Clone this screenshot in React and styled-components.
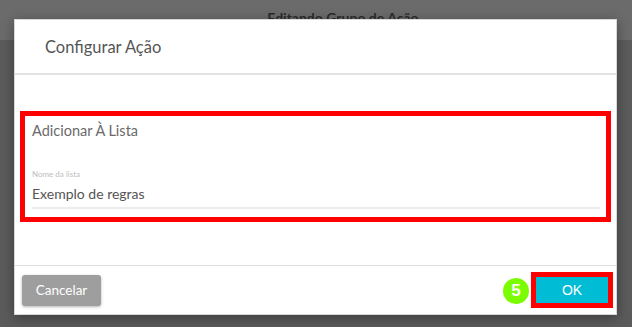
import React from "react";
import styled, { createGlobalStyle } from "styled-components";

const Global = createGlobalStyle`
  html, body { margin: 0; padding: 0; }
  body { font-family: Lato, "Open Sans", sans-serif; background: #5b5b5b; }
`;

const Page = styled.div`
  position: relative;
  width: 632px;
  height: 327px;
  overflow: hidden;
  background: #5b5b5b;
`;

const TopBar = styled.div`
  height: 40px;
  background: #6b6b6b;
  display: flex;
  justify-content: center;
  padding-left: 54px;
  box-sizing: border-box;
`;

const TopTitle = styled.div`
  margin-top: 10px;
  font-size: 14px;
  line-height: 16px;
  font-weight: 700;
  color: #2b2b2b;
`;

const Modal = styled.div`
  position: absolute;
  left: 14px;
  top: 19px;
  width: 603px;
  height: 296px;
  background: #fff;
  display: flex;
  flex-direction: column;
  box-shadow: 0 3px 12px rgba(0, 0, 0, 0.35);
  border: 1px solid #d8d8d8;
  box-sizing: border-box;
`;

const Header = styled.div`
  height: 53px;
  flex: none;
  display: flex;
  align-items: center;
  padding-left: 30px;
  border-bottom: 2px solid #e2e2e2;
  font-size: 16.5px;
  color: #555;
`;

const Body = styled.div`
  flex: 1;
  padding: 36px 5px 0 5px;
`;

const Highlight = styled.div`
  border: 5px solid #ff0000;
  height: 111px;
  box-sizing: border-box;
  padding: 6px 6px 0 7px;
`;

const SectionTitle = styled.div`
  font-size: 14.5px;
  line-height: 18px;
  color: #6a6a6a;
`;

const Field = styled.div`
  margin-top: 29px;
  border-bottom: 2px solid #ececec;
  padding-bottom: 4px;
`;

const FieldLabel = styled.div`
  font-size: 8px;
  line-height: 10px;
  color: #bdbdbd;
`;

const FieldValue = styled.div`
  margin-top: 6px;
  font-size: 14px;
  line-height: 18px;
  color: #555;
`;

const Footer = styled.div`
  height: 48px;
  flex: none;
  border-top: 1px solid #dedede;
  display: flex;
  align-items: center;
  justify-content: space-between;
  padding: 0 3px 0 7px;
`;

const CancelButton = styled.button`
  width: 79px;
  height: 31px;
  border: none;
  border-radius: 3px;
  background: #9e9e9e;
  color: #fff;
  font-family: Lato, sans-serif;
  font-size: 13.5px;
  box-shadow: 0 1px 3px rgba(0, 0, 0, 0.3);
  padding: 0;
`;

const Right = styled.div`
  display: flex;
  align-items: center;
  gap: 2px;
`;

const Badge = styled.div`
  width: 26px;
  height: 26px;
  border-radius: 50%;
  background: #7cfc00;
  color: #fff;
  font-family: "Liberation Sans", Arial, sans-serif;
  font-weight: 700;
  font-size: 17px;
  display: flex;
  align-items: center;
  justify-content: center;
  margin-top: 2px;
`;

const OkFrame = styled.div`
  border: 5px solid #ff0000;
  display: flex;
`;

const OkButton = styled.button`
  width: 72px;
  height: 26px;
  border: none;
  background: #00bcd4;
  color: #fff;
  font-family: "Liberation Sans", Arial, sans-serif;
  font-size: 14px;
  padding: 0;
`;

export default function App() {
  return (
    <Page>
      <Global />
      <TopBar>
        <TopTitle>Editando Grupo de Ação</TopTitle>
      </TopBar>
      <Modal>
        <Header>Configurar Ação</Header>
        <Body>
          <Highlight>
            <SectionTitle>Adicionar À Lista</SectionTitle>
            <Field>
              <FieldLabel>Nome da lista</FieldLabel>
              <FieldValue>Exemplo de regras</FieldValue>
            </Field>
          </Highlight>
        </Body>
        <Footer>
          <CancelButton>Cancelar</CancelButton>
          <Right>
            <Badge>5</Badge>
            <OkFrame>
              <OkButton>OK</OkButton>
            </OkFrame>
          </Right>
        </Footer>
      </Modal>
    </Page>
  );
}
